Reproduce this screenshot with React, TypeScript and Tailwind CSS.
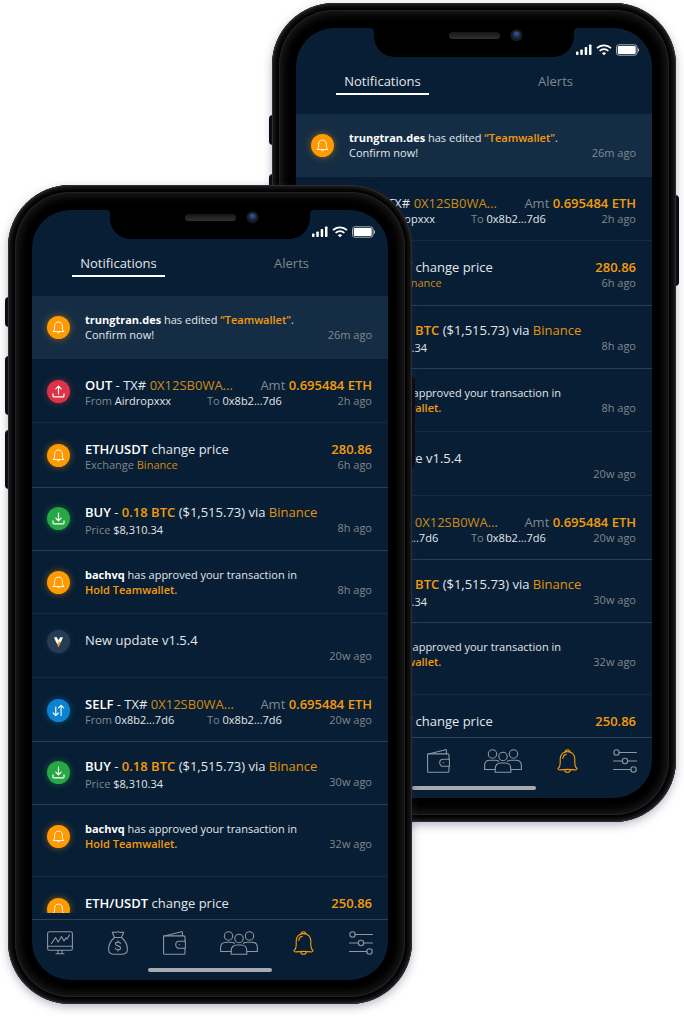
import type { ReactNode } from 'react';

type Kind = 'bell' | 'out' | 'buy' | 'self' | 'logo';

function BellGlyph() {
  return (
    <svg width="13" height="13" viewBox="0 0 13 13" fill="none" stroke="#fff" strokeWidth="0.9" strokeLinecap="round" strokeLinejoin="round" aria-hidden="true">
      <path d="M1.200 10.300c1-.7 1.400-1.600 1.400-3.100V5.200C2.600 2.800 4.200 1 6.500 1s3.900 1.800 3.900 4.200v2c0 1.500.4 2.400 1.400 3.100z" />
      <path d="M5 10.600c.2.900.8 1.300 1.500 1.300s1.300-.4 1.500-1.300" />
    </svg>
  );
}

function TrayGlyph({ down }: { down?: boolean }) {
  return (
    <svg width="13" height="13" viewBox="0 0 13 13" fill="none" stroke="#fff" strokeWidth="1.2" strokeLinecap="round" strokeLinejoin="round" aria-hidden="true">
      <path d="M1 8.800v2.200c0 .5.300.8.800.8h9.400c.5 0 .8-.3.800-.8V8.800" />
      {down ? <path d="M6.500 1v7.800M3.800 6.200l2.700 2.700 2.700-2.700" /> : <path d="M6.500 9V1.200M3.800 3.900l2.700-2.700 2.700 2.700" />}
    </svg>
  );
}

function SwapGlyph() {
  return (
    <svg width="13" height="13" viewBox="0 0 13 13" fill="none" stroke="#fff" strokeWidth="1.1" strokeLinecap="round" strokeLinejoin="round" aria-hidden="true">
      <path d="M3.800 3v8.500M1.200 9l2.600 2.600L6.300 9M9.100 11.500V1.300M6.500 3.900l2.600-2.600 2.600 2.600" />
    </svg>
  );
}

function LogoGlyph() {
  return (
    <svg width="11" height="12" viewBox="0 0 11 12" aria-hidden="true">
      <path d="M1 1.200h2.800l1.700 3 1.700-3H10L7.800 6.500H3.200z" fill="#fff" />
      <path d="M3.200 6.500L5.500 4.800l2.300 1.700L5.500 11.500z" fill="#e59a24" />
      <path d="M3.200 6.500L5.500 8V4.300z" fill="#fff" />
    </svg>
  );
}

const badges: Record<Kind, { style: string; glyph: ReactNode }> = {
  bell: { style: 'bg-[#ff9a02] shadow-[0_0_7px_rgba(255,154,2,0.5)]', glyph: <BellGlyph /> },
  out: { style: 'bg-[#dc3349] shadow-[0_0_7px_rgba(220,51,73,0.5)]', glyph: <TrayGlyph /> },
  buy: { style: 'bg-[#27a844] shadow-[0_0_7px_rgba(39,168,68,0.5)]', glyph: <TrayGlyph down /> },
  self: { style: 'bg-[#0a84d0] shadow-[0_0_7px_rgba(10,132,208,0.5)]', glyph: <SwapGlyph /> },
  logo: { style: 'bg-[#263c55] shadow-[0_0_7px_rgba(38,60,85,0.5)]', glyph: <LogoGlyph /> },
};

const strong = 'font-semibold text-[#f49b0b]';
const soft = 'text-[#d08c14]';
const muted = 'text-[#82888e]';
const faint = 'border-b border-[#122c44]';
const bright = 'border-b border-[#24405a]';

function Row({ kind, size, iconTop, textTop, line = '', time, second, children }: {
  kind: Kind; size: string; iconTop: string; textTop: string; line?: string; time?: string; second?: ReactNode; children: ReactNode;
}) {
  const badge = badges[kind];
  return (
    <li className={`flex shrink-0 gap-[15px] pr-4 pl-[15px] ${size} ${line}`}>
      <span className={`flex size-[23px] shrink-0 items-center justify-center rounded-full ${badge.style} ${iconTop}`}>{badge.glyph}</span>
      <div className={`min-w-0 flex-1 whitespace-nowrap ${textTop}`}>
        {children}
        <div className="flex items-start justify-between text-[11px] leading-4">
          <div>{second}</div>
          {time && <time className={muted}>{time}</time>}
        </div>
      </div>
    </li>
  );
}

function Transfer({ kind, type, from, line, time }: { kind: Kind; type: string; from: string; line: string; time: string }) {
  return (
    <Row
      kind={kind} size="h-16" iconTop="mt-[21px]" textTop="pt-[18px]" line={line} time={time}
      second={
        <p className="flex">
          <span className="w-[122px]"><span className={muted}>From</span> {from}</span>
          <span><span className={muted}>To</span> 0x8b2...7d6</span>
        </p>
      }
    >
      <p className="flex justify-between text-[13px] leading-4">
        <span><b className="font-semibold text-white">{type}</b> - TX# <span className={soft}>0X12SB0WA...</span></span>
        <span><span className={muted}>Amt</span> <b className={strong}>0.695484 ETH</b></span>
      </p>
    </Row>
  );
}

function Buy({ time }: { time: string }) {
  return (
    <Row
      kind="buy" size="h-[63px]" iconTop="mt-[19px]" textTop="pt-4" line={bright} time={time}
      second={<p className="pt-0.5"><span className={muted}>Price</span> $8,310.34</p>}
    >
      <p className="text-[13px] leading-4"><b className="font-semibold text-white">BUY</b> - <b className={strong}>0.18 BTC</b> ($1,515.73) via <span className="text-[#e3930f]">Binance</span></p>
    </Row>
  );
}

function PriceChange({ value, exchange, line, time }: { value: string; exchange?: string; line?: string; time?: string }) {
  return (
    <Row
      kind="bell" size="h-[65px]" iconTop="mt-[21px]" textTop="pt-[18px]" line={line} time={time}
      second={exchange && <p><span className={muted}>Exchange</span> <span className={soft}>{exchange}</span></p>}
    >
      <p className="flex justify-between text-[13px] leading-4">
        <span><b className="font-semibold text-white">ETH/USDT</b> change price</span>
        <b className={strong}>{value}</b>
      </p>
    </Row>
  );
}

function Approval({ size, time }: { size: string; time: string }) {
  return (
    <Row kind="bell" size={size} iconTop="mt-5" textTop="pt-4" line={faint} time={time} second={<b className={strong}>Hold Teamwallet.</b>}>
      <p className="text-[11px] leading-[15px]"><b className="font-bold text-white">bachvq</b> has approved your transaction in</p>
    </Row>
  );
}

function Notifications() {
  return (
    <ul className="flex h-[617px] flex-col overflow-hidden">
      <Row kind="bell" size="h-[63px] bg-[#152d44]" iconTop="mt-5" textTop="pt-4" time="26m ago" second="Confirm now!">
        <p className="text-[11px] leading-[15px]"><b className="font-bold text-white">trungtran.des</b> has edited <b className={strong}>“Teamwallet"</b>.</p>
      </Row>
      <Transfer kind="out" type="OUT" from="Airdropxxx" line={faint} time="2h ago" />
      <PriceChange value="280.86" exchange="Binance" line={bright} time="6h ago" />
      <Buy time="8h ago" />
      <Approval size="h-[63px]" time="8h ago" />
      <Row kind="logo" size="h-16" iconTop="mt-4" textTop="pt-[18px]" line={faint} time="20w ago">
        <p className="text-[13px] leading-4">New update v1.5.4</p>
      </Row>
      <Transfer kind="self" type="SELF" from="0x8b2...7d6" line={bright} time="20w ago" />
      <Buy time="30w ago" />
      <Approval size="h-[72px]" time="32w ago" />
      <PriceChange value="250.86" />
    </ul>
  );
}

function NavIcon({ label, width, active, children }: { label: string; width: number; active?: boolean; children: ReactNode }) {
  return (
    <button type="button" aria-label={label} className={active ? 'text-[#f49b0b]' : 'text-[#8f979f]'}>
      <svg width={width} height="24" viewBox={`0 0 ${width} 24`} fill="none" stroke="currentColor" strokeWidth="1.1" strokeLinecap="round" strokeLinejoin="round" aria-hidden="true">{children}</svg>
    </button>
  );
}

function BottomNav() {
  return (
    <nav className="mt-1.5 flex flex-col items-center border-t border-[#2b435a]">
      <div className="flex h-[45px] w-full items-center justify-between px-[15px]">
        <NavIcon label="Markets" width={26}>
          <rect x="0.6" y="0.8" width="24.8" height="18.5" rx="1.8" />
          <path d="M.6 15.300h24.800M11 19.300v3M15 19.300v3M9 22.800h8M4.500 12.500L8.500 6.500l2.700 4.500L14.500 5.500l2.500 4.500 1.800-3 1.200 1L22.500 4" />
        </NavIcon>
        <NavIcon label="Funds" width={20}>
          <path d="M6.500 6.500L4.300 1.500c1.500-1 2.700.4 3.800-.2 1.200-.7 2.600-.7 3.800 0 1.100.6 2.300-.8 3.800.2L13.500 6.500zM6.500 6.500C3 9.500.6 14 .6 18.300c0 3.200 1.700 4.900 4.900 4.900h9c3.200 0 4.900-1.700 4.900-4.900 0-4.300-2.400-8.800-5.900-11.800" />
          <path d="M12.500 12.600c-.2-1-1.200-1.500-2.500-1.500-1.500 0-2.500.7-2.500 1.800 0 2.700 5.100 1.300 5.100 4 0 1.200-1.100 1.900-2.600 1.900s-2.500-.7-2.700-1.800M10 9.800v1.300M10 18.800v1.300" />
        </NavIcon>
        <NavIcon label="Wallet" width={23}>
          <path d="M22 10.300V6.200c0-.8-.5-1.300-1.300-1.300H.6v17.300c0 .6.400 1 1 1h19.100c.8 0 1.300-.5 1.300-1.300v-4.600" />
          <path d="M2.500 4.700L18.500.7c.5-.1.900.1.900.6v3.500" />
          <path d="M22.400 10.300h-6.200a3.500 3.500 0 000 7h6.200zM16.200 13.800h.4" />
        </NavIcon>
        <NavIcon label="Team" width={38}>
          <circle cx="8.5" cy="5" r="4.2" /><circle cx="29.5" cy="5" r="4.2" /><circle cx="19" cy="7.5" r="4.2" />
          <path d="M11 20.500H.6v-3.800c0-3.400 2.300-5.500 5.500-5.500h5c1.400 0 2.500.4 3.500 1.100M27 20.500h10.400v-3.800c0-3.400-2.300-5.500-5.500-5.500h-5c-1.400 0-2.500.4-3.500 1.100" />
          <path d="M11.200 23.200v-3.800c0-3.200 2.300-5.400 5.400-5.400h4.800c3.100 0 5.400 2.200 5.400 5.400v3.800z" />
        </NavIcon>
        <NavIcon label="Notifications" width={21} active>
          <path d="M8.300 2.800C8.300 1.500 9.200.7 10.500.7s2.200.8 2.200 2.100M.8 19.800c1.800-1.500 2.400-2.900 2.400-5.300V10C3.200 5.600 6.200 2.600 10.500 2.600s7.300 3 7.300 7.400v4.500c0 2.400.6 3.800 2.400 5.300-.6 1-1.300 1.300-2.200 1.100-5-.7-10-.7-15 0-.9.2-1.600-.1-2.200-1.100zM7.500 20.800c.3 1.500 1.400 2.400 3 2.400s2.700-.9 3-2.400M5.800 9.500c.2-2 1.500-3.700 3.500-4.200" />
        </NavIcon>
        <NavIcon label="Settings" width={24}>
          <circle cx="3.5" cy="3.5" r="2.7" /><circle cx="12" cy="12" r="2.7" /><circle cx="20.5" cy="20.5" r="2.7" />
          <path d="M6.200 3.500h17.300M.5 12h8.800M14.700 12h8.800M.5 20.500h17.300" />
        </NavIcon>
      </div>
      <span className="mt-[3px] mb-2 h-1 w-[124px] rounded-full bg-[#a6abb1]" />
    </nav>
  );
}

function StatusBar() {
  return (
    <div className="flex h-11 items-center justify-end gap-1 pr-[13px]">
      <svg width="16" height="12" viewBox="0 0 16 12" fill="#fff" aria-hidden="true">
        <rect x="0" y="7.5" width="2.5" height="3.5" rx="0.7" /><rect x="4.3" y="5.5" width="2.5" height="5.5" rx="0.7" /><rect x="8.7" y="3" width="2.5" height="8" rx="0.7" /><rect x="13" y="0.5" width="2.5" height="10.5" rx="0.7" />
      </svg>
      <svg width="16" height="12" viewBox="0 0 16 12" fill="none" stroke="#fff" strokeWidth="1.7" aria-hidden="true">
        <path d="M1 4.200a10 10 0 0114 0M3.600 7a6.300 6.300 0 018.800 0" /><path d="M8 11.300L5.900 9.200a3 3 0 014.200 0z" fill="#fff" stroke="none" />
      </svg>
      <svg width="23" height="12" viewBox="0 0 23 12" fill="none" aria-hidden="true">
        <rect x="0.5" y="0.8" width="20.5" height="10.4" rx="2.4" stroke="#a9b2bb" /><rect x="1.8" y="2.1" width="17.9" height="7.8" rx="1.2" fill="#fff" /><path d="M21.800 4v4c.8-.3 1.200-1 1.200-2s-.4-1.700-1.200-2z" fill="#cbd0d6" />
      </svg>
    </div>
  );
}

function Notch() {
  return (
    <svg className="absolute top-0 left-1/2 -translate-x-1/2" width="208" height="30" viewBox="0 0 208 30" aria-hidden="true">
      <defs>
        <radialGradient id="lens" cx="0.5" cy="0.3" r="0.6"><stop offset="0" stopColor="#3a5a94" /><stop offset="1" stopColor="#12203c" /></radialGradient>
        <linearGradient id="speaker" x1="0" x2="0" y1="0" y2="1"><stop offset="0" stopColor="#161616" /><stop offset="1" stopColor="#303030" /></linearGradient>
      </defs>
      <path d="M0 0c3 0 4 1.500 4 4v3c0 13 9 22 22 22h156c13 0 22-9 22-22V4c0-2.500 1-4 4-4z" fill="#000" />
      <rect x="79" y="4" width="51" height="7" rx="3.5" fill="url(#speaker)" />
      <circle cx="146.5" cy="7.300" r="6" fill="#1a1a1c" />
      <circle cx="146.5" cy="7.300" r="4" fill="url(#lens)" />
    </svg>
  );
}

function Phone({ className }: { className: string }) {
  return (
    <section className={`relative w-[404px] shrink-0 ${className}`}>
      <span className="absolute top-[112px] -left-[3px] h-[30px] w-1 rounded-l-sm bg-[#08080c]" />
      <span className="absolute top-[171px] -left-[3px] h-[59px] w-1 rounded-l-sm bg-[#08080c]" />
      <span className="absolute top-[245px] -left-[3px] h-[59px] w-1 rounded-l-sm bg-[#08080c]" />
      <span className="absolute top-[192px] -right-[3px] h-[91px] w-1 rounded-r-sm bg-[#08080c]" />
      <div className="relative rounded-[62px] bg-black p-[7px] shadow-[0_3px_10px_rgba(60,40,90,0.35),inset_0_0_1px_1px_#303030,inset_0_0_4px_3px_#202020]">
        <div className="rounded-[55px] bg-black px-[17px] pt-[18px] pb-[17px] shadow-[inset_0_0_1px_1px_#232323,inset_0_0_9px_4px_#1b1b1b]">
          <div className="relative flex flex-col overflow-hidden rounded-[38px] bg-[#071e34] text-[#e3e7eb]">
            <Notch />
            <StatusBar />
            <div role="tablist" className="grid grid-cols-2 justify-items-center pr-2.5 pb-[19px] text-[13px] leading-[18px]">
              <button type="button" role="tab" aria-selected="true" className="w-[93px] border-b-2 border-white pb-[3px]">Notifications</button>
              <button type="button" role="tab" aria-selected="false" className={`w-[93px] pb-[5px] ${muted}`}>Alerts</button>
            </div>
            <Notifications />
            <BottomNav />
          </div>
        </div>
      </div>
    </section>
  );
}

export default function App() {
  return (
    <main className="flex min-h-screen items-start justify-center overflow-hidden bg-white pt-[3px] pb-3 font-['Open_Sans',sans-serif]">
      <Phone className="z-10 mt-[182px]" />
      <Phone className="-ml-[140px]" />
    </main>
  );
}
